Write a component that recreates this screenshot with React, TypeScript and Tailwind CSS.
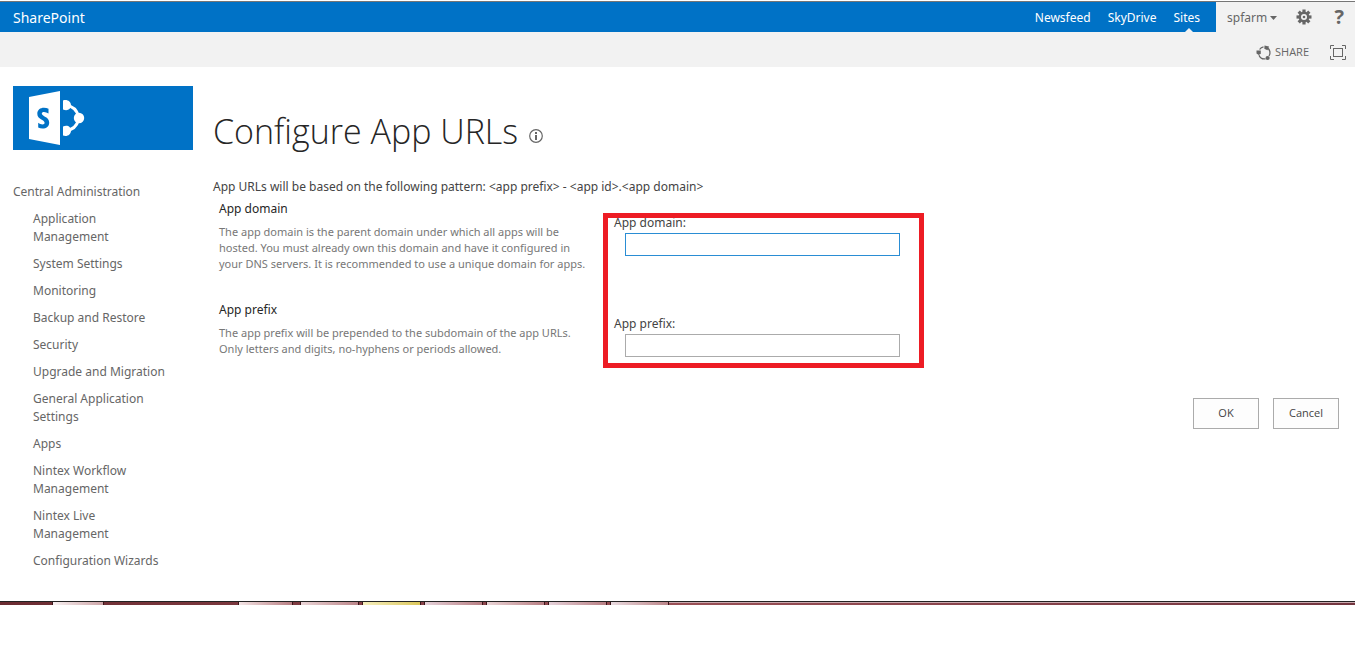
import React from "react";

const navItems: { label: string; lines: string[] }[] = [
  { label: "application", lines: ["Application", "Management"] },
  { label: "system", lines: ["System Settings"] },
  { label: "monitoring", lines: ["Monitoring"] },
  { label: "backup", lines: ["Backup and Restore"] },
  { label: "security", lines: ["Security"] },
  { label: "upgrade", lines: ["Upgrade and Migration"] },
  { label: "general", lines: ["General Application", "Settings"] },
  { label: "apps", lines: ["Apps"] },
  { label: "workflow", lines: ["Nintex Workflow", "Management"] },
  { label: "live", lines: ["Nintex Live", "Management"] },
  { label: "wizards", lines: ["Configuration Wizards"] },
];

function GearIcon() {
  return (
    <svg width="16" height="16" viewBox="0 0 16 16" aria-hidden="true">
      <g fill="#666">
        {[0, 45, 90, 135].map((a) => (
          <rect key={a} x="6.4" y="0.5" width="3.2" height="15" transform={`rotate(${a} 8 8)`} />
        ))}
        <circle cx="8" cy="8" r="5.4" />
      </g>
      <circle cx="8" cy="8" r="3" fill="#f2f2f2" />
      <circle cx="8" cy="8" r="1.3" fill="#666" />
    </svg>
  );
}

function ShareIcon() {
  return (
    <svg width="16" height="16" viewBox="0 0 16 16" aria-hidden="true">
      <g fill="none" stroke="#666" strokeWidth="1.3">
        <path d="M3.600 4.500A5.900 5.900 0 0 1 7.500 1.900" />
        <path d="M11.500 2.900A5.900 5.900 0 0 1 13 11" />
        <path d="M9.500 13.800A5.900 5.900 0 0 1 3 10.200" />
      </g>
      <g fill="#666">
        <path d="M.5 5.500h4.300v3.200L2.700 10 .5 8.500z" />
        <path d="M8.500.5 13 1.500 11.500 5.300 8.300 3.800z" />
        <circle cx="11.600" cy="13" r="2.100" />
      </g>
    </svg>
  );
}

function FocusIcon() {
  return (
    <svg width="16" height="15" viewBox="0 0 16 15" fill="none" stroke="#666" aria-hidden="true">
      <path d="M4 .5H.5V4M12 .5h3.500V4M.5 11v3.500H4M15.500 11v3.500H12" />
      <rect x="3.500" y="3.500" width="9" height="8" />
    </svg>
  );
}

function Logo() {
  return (
    <svg width="180" height="64" viewBox="0 0 180 64" role="img" aria-label="SharePoint logo">
      <path d="M16 11 47 5v54l-31-6z" fill="#fff" />
      <path
        d="M35.500 22.700v4.700c-1.500-1-3-1.500-4.500-1.500-1.400 0-2.200.6-2.200 1.700 0 3 7.400 3.200 7.400 8.900 0 4-2.900 6-6.600 6-1.700 0-3.100-.3-4.400-.9v-4.900c1.400 1.100 2.800 1.700 4.300 1.700 1.400 0 2.100-.6 2.100-1.700 0-3-7.300-3.200-7.300-8.900 0-3.900 2.900-6 6.700-6 1.700 0 3.200.3 4.500.9z"
        fill="#0072c6"
      />
      <g fill="none" stroke="#fff" strokeWidth="3">
        <path d="M54 20c6 0 10 5 12 11" />
        <path d="M54 44c6 0 10-5 12-11" />
      </g>
      <g fill="#fff">
        <path d="M50 14.500c4-1.500 8 1 8 4.800s-3.500 6.200-8 4.200z" />
        <path d="M50 40.500c4.500-2 8 .4 8 4.200s-4 6.300-8 4.800z" />
        <circle cx="66" cy="32" r="5.200" />
      </g>
    </svg>
  );
}

function Setting(props: {
  id: string;
  title: string;
  lines: string[];
  focused?: boolean;
}) {
  return (
    <section className="flex h-[101px] items-start">
      <div className="w-[394px] shrink-0 pl-[6px]">
        <h2 className="text-[12px] leading-[18px] text-[#262626]">{props.title}</h2>
        <p className="mt-[6px] text-[11px] leading-[16px] text-[#777]">
          {props.lines.map((line) => (
            <span key={line} className="block whitespace-nowrap">{line}</span>
          ))}
        </p>
      </div>
      <div className="flex flex-col pt-[14px] pl-[7px]">
        <label htmlFor={props.id} className="text-[12px] leading-[18px] text-[#444]">{props.title}:</label>
        <input
          id={props.id}
          type="text"
          className={
            props.focused
              ? "mt-px ml-[11px] h-[23px] w-[275px] border border-[#2a8dd4] bg-white px-1 text-[12px] outline-none"
              : "mt-px ml-[11px] h-[23px] w-[275px] border border-[#ababab] bg-white px-1 text-[12px] outline-none"
          }
        />
      </div>
    </section>
  );
}

const taskButtons = [
  "ml-[52px] w-[50px] from-[#f7f0f1] to-[#cda5a8]",
  "ml-[134px] w-[53px] from-[#f3e5e6] to-[#b87f84]",
  "ml-[7px] w-[57px] from-[#ead5d7] to-[#bb8589]",
  "ml-[3px] w-[57px] from-[#f5eebc] to-[#dcc75a]",
  "ml-[3px] w-[57px] from-[#e5d2da] to-[#b87f84]",
  "ml-[3px] w-[57px] from-[#ead5d7] to-[#b87f84]",
  "ml-[3px] w-[57px] from-[#e5d2da] to-[#b87f84]",
  "ml-[3px] w-[57px] from-[#e9dbe0] to-[#bb8589]",
];

export default function App() {
  return (
    <div className="min-h-screen bg-white pt-px font-['Noto_Sans','Open_Sans',sans-serif] text-[12px] text-[#444]">
      <header>
        <div className="flex h-[31px] justify-between border-t border-[#767676] bg-[#f2f2f2]">
          <div className="flex flex-1 items-center justify-between bg-[#0072c6] pr-4 pl-[13px] text-white">
            <a href="#" className="text-[14px]">SharePoint</a>
            <nav className="flex h-full gap-[17px] text-[12px] leading-[31px]">
              <a href="#">Newsfeed</a>
              <a href="#">SkyDrive</a>
              <a href="#" className="relative">
                Sites
                <svg className="absolute bottom-0 left-1/2 -ml-0.5" width="8" height="4" aria-hidden="true">
                  <path d="M0 4 4 0l4 4z" fill="#f2f2f2" />
                </svg>
              </a>
            </nav>
          </div>
          <div className="flex w-[139px] items-center pl-[11px] text-[#666]">
            <button className="flex items-center gap-[3px] text-[12px] leading-[31px]">
              spfarm
              <svg className="mt-0.5" width="7" height="4" aria-hidden="true"><path d="M0 0h7L3.500 4z" fill="#666" /></svg>
            </button>
            <button aria-label="Settings" className="ml-auto"><GearIcon /></button>
            <button aria-label="Help" className="mr-[11px] ml-[22px] font-['Open_Sans',sans-serif] text-[20px] leading-[20px] font-bold">?</button>
          </div>
        </div>
        <div className="flex h-[35px] items-center justify-end bg-[#f2f2f2] pt-[6px] pr-[9px] text-[#666]">
          <button className="flex items-center gap-[3px] font-['Open_Sans',sans-serif] text-[11px]"><ShareIcon />SHARE</button>
          <button aria-label="Focus on content" className="ml-[21px]"><FocusIcon /></button>
        </div>
      </header>

      <div className="flex pt-[19px] pl-[13px]">
        <aside className="w-[200px] shrink-0">
          <a href="#" className="block w-[180px] bg-[#0072c6]"><Logo /></a>
          <nav className="mt-[33px] text-[12px] leading-[18px] text-[#666]">
            <a href="#">Central Administration</a>
            <ul className="mt-[9px] flex flex-col gap-[9px] pl-5">
              {navItems.map((item) => (
                <li key={item.label}>
                  <a href="#" className="block">
                    {item.lines.map((line) => <span key={line} className="block">{line}</span>)}
                  </a>
                </li>
              ))}
            </ul>
          </nav>
        </aside>

        <main className="min-w-0 flex-1 pt-[21px]">
          <div className="flex items-center gap-[11px]">
            <h1 className="font-['Open_Sans','Noto_Sans',sans-serif] text-[34px] leading-[48px] font-light text-[#262626]">Configure App URLs</h1>
            <svg className="mt-2.5" width="14" height="14" viewBox="0 0 14 14" aria-hidden="true">
              <circle cx="7" cy="7" r="6.300" fill="none" stroke="#666" strokeWidth="1.200" />
              <path d="M6 3h2v2H6zM6 6h2v5H6z" fill="#666" />
            </svg>
          </div>
          <p className="mt-[23px] text-[12px] leading-[18px]">
            App URLs will be based on the following pattern: &lt;app prefix&gt; - &lt;app id&gt;.&lt;app domain&gt;
          </p>
          <form className="relative mt-1" onSubmit={(e) => e.preventDefault()}>
            <Setting
              id="app-domain"
              title="App domain"
              focused
              lines={[
                "The app domain is the parent domain under which all apps will be",
                "hosted. You must already own this domain and have it configured in",
                "your DNS servers. It is recommended to use a unique domain for apps.",
              ]}
            />
            <Setting
              id="app-prefix"
              title="App prefix"
              lines={[
                "The app prefix will be prepended to the subdomain of the app URLs.",
                "Only letters and digits, no-hyphens or periods allowed.",
              ]}
            />
            <div className="pointer-events-none absolute top-[13px] left-[390px] h-[155px] w-[321px] border-5 border-[#ed1c24]" />
            <div className="-mt-1 flex justify-end gap-[14px] pr-4 font-['Open_Sans',sans-serif]">
              <button className="h-[31px] w-[66px] border border-[#ababab] bg-[#fdfdfd] text-[11px]">OK</button>
              <button className="h-[31px] w-[66px] border border-[#ababab] bg-[#fdfdfd] text-[11px]">Cancel</button>
            </div>
          </form>
        </main>
      </div>

      <footer className="mt-[31px] flex h-1 border-t border-[#222] bg-linear-to-r from-[#6b2c32] via-[#9a5056] to-[#743640]">
        {taskButtons.map((classes, i) => (
          <span key={i} className={`box-content h-full shrink-0 border-x border-[#3a1519] bg-linear-to-r ${classes}`} />
        ))}
        <span className="h-px flex-1 bg-[#c9a9ae]" />
      </footer>
    </div>
  );
}
